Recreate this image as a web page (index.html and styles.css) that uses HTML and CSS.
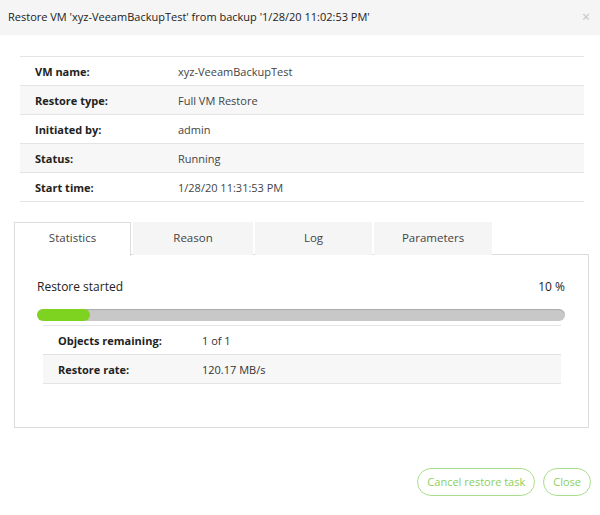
FILE: index.html
```html
<!DOCTYPE html>
<html>
<head>
<meta charset="utf-8">
<link rel="stylesheet" href="styles.css">
</head>
<body>
<div class="dialog">
  <div class="header">
    <span class="title">Restore VM 'xyz-VeeamBackupTest' from backup '1/28/20 11:02:53 PM'</span>
    <span class="close">&#215;</span>
  </div>
  <div class="info">
    <div class="row"><span class="label">VM name:</span><span class="value">xyz-VeeamBackupTest</span></div>
    <div class="row alt"><span class="label">Restore type:</span><span class="value">Full VM Restore</span></div>
    <div class="row"><span class="label">Initiated by:</span><span class="value">admin</span></div>
    <div class="row alt"><span class="label">Status:</span><span class="value">Running</span></div>
    <div class="row"><span class="label">Start time:</span><span class="value">1/28/20 11:31:53 PM</span></div>
  </div>
  <div class="tabs">
    <div class="tab active">Statistics</div>
    <div class="tab t2">Reason</div>
    <div class="tab t3">Log</div>
    <div class="tab t4">Parameters</div>
  </div>
  <div class="panel">
    <div class="progress-head"><span>Restore started</span><span>10 %</span></div>
    <div class="bar"><div class="fill" style="width:10%"></div></div>
    <div class="stats">
      <div class="srow"><span class="slabel">Objects remaining:</span><span>1 of 1</span></div>
      <div class="srow alt"><span class="slabel">Restore rate:</span><span>120.17 MB/s</span></div>
    </div>
  </div>
  <div class="actions">
    <button class="btn">Cancel restore task</button>
    <button class="btn">Close</button>
  </div>
</div>
</body>
</html>
```
FILE: styles.css
```css
html, body { margin: 0; padding: 0; background: #fff; }
body {
  font-family: "Open Sans", "Noto Sans", sans-serif;
  font-size: 11px;
  color: #333;
  width: 600px;
  height: 515px;
  overflow: hidden;
}
.header {
  height: 35px;
  background: #f5f5f5;
  display: flex;
  align-items: center;
  justify-content: space-between;
  padding: 0 10px 0 8px;
}
.title { font-size: 11px; color: #222; margin-top: -3px; }
.close { color: #c4c4c4; font-size: 14px; margin-top: -3px; }
.info {
  margin: 21px 16px 0 20px;
  border-top: 1px solid #e4e4e4;
}
.row {
  display: flex;
  align-items: center;
  border-bottom: 1px solid #e4e4e4;
  box-sizing: border-box;
  height: 29px;
}
.row.alt, .srow.alt { background: #f7f7f7; }
.label { width: 158px; padding-left: 15px; box-sizing: border-box; font-weight: 700; color: #222; }
.value { color: #444; }
.tabs {
  display: flex;
  gap: 2px;
  margin: 20px 0 0 14px;
  height: 33px;
}
.tab {
  width: 117px;
  background: #f5f5f5;
  display: flex;
  align-items: center;
  justify-content: center;
  color: #444;
  font-size: 11.5px;
  padding-bottom: 3px;
  box-sizing: border-box;
}
.tab.t2 { width: 120px; }
.tab.t4 { width: 118px; }
.tab.active {
  background: #fff;
  border: 1px solid #dcdcdc;
  border-bottom: none;
  height: 34px;
  padding-bottom: 4px;
  position: relative;
  z-index: 1;
}
.panel {
  margin: -1px 11px 0 14px;
  height: 174px;
  box-sizing: border-box;
  border: 1px solid #dcdcdc;
  padding: 23px 23px 0 22px;
}
.progress-head {
  display: flex;
  justify-content: space-between;
  font-size: 12px;
  color: #222;
}
.bar {
  margin-top: 14px;
  height: 12px;
  border-radius: 6px;
  background: #c8c8c8;
  box-shadow: inset 0 1px 1px rgba(0,0,0,0.15);
  overflow: hidden;
}
.fill {
  height: 100%;
  background: #7ed321;
  border-radius: 6px;
}
.stats {
  margin: 4px 4px 0 6px;
  border-top: 1px solid #e4e4e4;
}
.srow {
  display: flex;
  align-items: center;
  height: 28px;
  border-bottom: 1px solid #e4e4e4;
}
.slabel { width: 159px; padding-left: 15px; box-sizing: border-box; font-weight: 700; color: #222; }
.actions {
  display: flex;
  justify-content: flex-end;
  gap: 8px;
  margin: 40px 9px 0 0;
}
.btn {
  font-family: "Open Sans", "Noto Sans", sans-serif;
  font-size: 11px;
  color: #8ad060;
  background: #fff;
  border: 1px solid #a9df8c;
  border-radius: 14px;
  height: 28px;
  padding: 0 9px 1px;
}
```
